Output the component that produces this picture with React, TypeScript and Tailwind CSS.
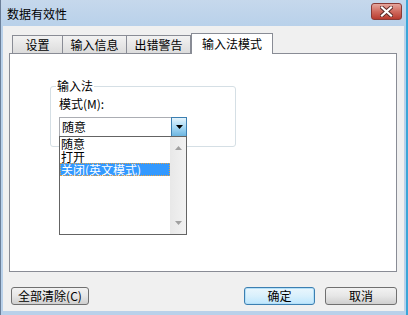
import { useState } from "react";

const tabs = ["设置", "输入信息", "出错警告", "输入法模式"];
const options = ["随意", "打开", "关闭(英文模式)"];

const App = () => {
  const [active] = useState(3);
  const [picked] = useState(2);

  return (
    <div className="w-[408px] h-[315px] flex flex-col bg-[#b9d1ea] border-l border-[#6b7f99] border-r-2 border-r-[#3aa6d8] font-['Noto_Sans_CJK_SC',sans-serif] text-[12px] leading-none text-black">
      {/* title bar */}
      <div className="h-[26px] shrink-0 flex items-center justify-between pl-[6px] pr-[4px] bg-gradient-to-b from-[#c6d8ec] to-[#b9d1ea]">
        <span className="text-[12px] pt-[1px]">数据有效性</span>
        <button className="mb-[4px] w-[31px] h-[17px] rounded-[3px] border border-[#8a3a35] bg-gradient-to-b from-[#e5a69d] via-[#d06a5e] to-[#b83b2f] flex items-center justify-center">
          <svg width="13" height="11" viewBox="0 0 13 11">
            <path d="M2 1.5 L11 9.5 M11 1.5 L2 9.5" stroke="#5a2a27" strokeWidth="4" strokeLinecap="square" />
            <path d="M2 1.5 L11 9.5 M11 1.5 L2 9.5" stroke="#ffffff" strokeWidth="2.2" strokeLinecap="square" />
          </svg>
        </button>
      </div>

      {/* body */}
      <div className="flex-1 flex flex-col ml-[2px] mr-[2px] mb-[4px] bg-[#f0f0f0] pl-[6px] pr-[7px] pt-[7px] pb-[6px]">
        <div className="h-[20px] flex items-end pl-[3px] relative z-10">
          {tabs.map((t, i) =>
            i === active ? (
              <div key={t} className="h-[21px] -mb-[1px] w-[82px] flex items-center justify-center bg-white border border-b-0 border-[#898c95]">
                {t}
              </div>
            ) : (
              <div key={t} className={`h-[18px] flex items-center justify-center border border-b-0 border-[#898c95] bg-gradient-to-b from-[#f2f2f2] to-[#dcdcdc] ${i === 0 ? "w-[51px]" : "w-[65px]"} ${i > 0 ? "-ml-[1px]" : ""}`}>
                {t}
              </div>
            )
          )}
        </div>

        <div className="h-[219px] w-[388px] shrink-0 bg-white border border-[#898c95] pl-[40px] pt-[32px]">
          <div className="relative w-[186px] h-[61px] border border-[#d5dfe5] rounded-[3px] pl-[8px] pt-[11px]">
            <span className="absolute left-[5px] -top-[7px] bg-white px-[1px]">输入法</span>
            <div>模式(M):</div>
            <div className="relative mt-[7px] w-[128px] h-[20px] border border-[#abadb3] flex items-center">
              <span className="pl-[2px] flex-1">随意</span>
              <div className="w-[16px] h-[20px] -mr-[1px] border border-[#3c7fb1] bg-gradient-to-b from-[#e5f4fc] via-[#a7d9f5] to-[#6cb5e0] flex items-center justify-center">
                <svg width="7" height="4" viewBox="0 0 7 4"><path d="M0 0 H7 L3.5 4 Z" fill="#000" /></svg>
              </div>
              {/* open drop list */}
              <div className="absolute left-[-1px] top-[18px] w-[128px] h-[99px] border border-[#646464] bg-white flex">
                <div className="flex-1 flex flex-col">
                  {options.map((o, i) => (
                    <div key={o} className={`h-[13px] leading-[13px] pl-[1px] ${i === picked ? "bg-[#3399ff] text-white outline outline-1 outline-dotted outline-[#e8a040] -outline-offset-1" : ""}`}>
                      {o}
                    </div>
                  ))}
                </div>
                <div className="w-[16px] bg-gradient-to-r from-[#e8e8e8] to-[#f2f2f2] flex flex-col justify-between items-center py-[9px]">
                  <svg width="7" height="4" viewBox="0 0 7 4"><path d="M0 4 H7 L3.5 0 Z" fill="#a0a0a0" /></svg>
                  <svg width="7" height="4" viewBox="0 0 7 4"><path d="M0 0 H7 L3.5 4 Z" fill="#a0a0a0" /></svg>
                </div>
              </div>
            </div>
          </div>
        </div>

        <div className="mt-[15px] h-[18px] flex items-center pl-[2px]">
          <button className="w-[78px] h-[18px] rounded-[3px] border border-[#707070] bg-gradient-to-b from-[#f2f2f2] via-[#e6e6e6] to-[#cfcfcf]">全部清除(C)</button>
          <div className="flex-1" />
          <button className="w-[71px] h-[18px] rounded-[3px] border border-[#3c7fb1] bg-gradient-to-b from-[#eaf6fd] via-[#d9f0fc] to-[#bee6fd] shadow-[inset_0_0_0_1px_#b4e0f8]">确定</button>
          <button className="ml-[10px] w-[72px] h-[18px] rounded-[3px] border border-[#707070] bg-gradient-to-b from-[#f2f2f2] via-[#e6e6e6] to-[#cfcfcf]">取消</button>
        </div>
      </div>
    </div>
  );
};

export default App;
